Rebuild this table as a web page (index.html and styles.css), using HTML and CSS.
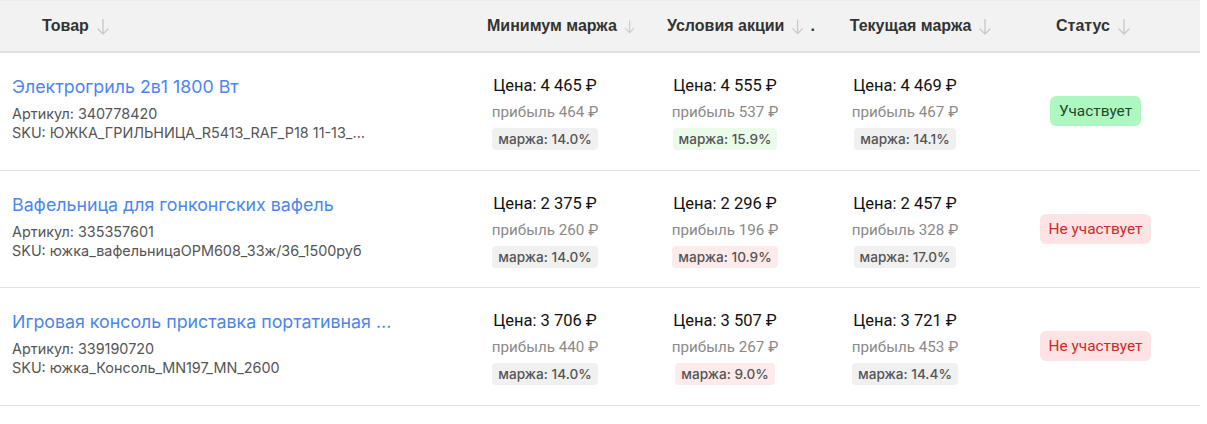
FILE: index.html
```html
<!DOCTYPE html>
<html lang="ru">
<head>
    <meta charset="UTF-8">
    <title>Товары в акции</title>
    <link rel="stylesheet" href="styles.css">
</head>
<body>

    <div class="table">
        <!-- Table header -->
        <div class="row head">
            <div class="th th-name">Товар
                <svg class="arrow" viewBox="0 0 14 18"><path d="M7 1V16M1.5 10.5L7 16L12.5 10.5"/></svg>
            </div>
            <div class="th th-mid">Минимум маржа
                <svg class="arrow" viewBox="0 0 14 18"><path d="M7 1V16M1.5 10.5L7 16L12.5 10.5"/></svg>
            </div>
            <div class="th th-mid">Условия акции
                <svg class="arrow" viewBox="0 0 14 18"><path d="M7 1V16M1.5 10.5L7 16L12.5 10.5"/></svg><span class="dot">.</span>
            </div>
            <div class="th th-mid">Текущая маржа
                <svg class="arrow" viewBox="0 0 14 18"><path d="M7 1V16M1.5 10.5L7 16L12.5 10.5"/></svg>
            </div>
            <div class="th th-status">Статус
                <svg class="arrow" viewBox="0 0 14 18"><path d="M7 1V16M1.5 10.5L7 16L12.5 10.5"/></svg>
            </div>
        </div>

        <!-- Row 1 -->
        <div class="row">
            <div class="cell product">
                <a href="#" class="name">Электрогриль 2в1 1800 Вт</a>
                <div class="meta">Артикул: 340778420</div>
                <div class="meta">SKU: ЮЖКА_ГРИЛЬНИЦА_R5413_RAF_P18 11-13_…</div>
            </div>
            <div class="cell price">
                <div class="cost">Цена: 4 465 ₽</div>
                <div class="profit">прибыль 464 ₽</div>
                <span class="margin">маржа: 14.0%</span>
            </div>
            <div class="cell price">
                <div class="cost">Цена: 4 555 ₽</div>
                <div class="profit">прибыль 537 ₽</div>
                <span class="margin good">маржа: 15.9%</span>
            </div>
            <div class="cell price">
                <div class="cost">Цена: 4 469 ₽</div>
                <div class="profit">прибыль 467 ₽</div>
                <span class="margin">маржа: 14.1%</span>
            </div>
            <div class="cell status">
                <span class="badge on">Участвует</span>
            </div>
        </div>

        <!-- Row 2 -->
        <div class="row">
            <div class="cell product">
                <a href="#" class="name">Вафельница для гонконгских вафель</a>
                <div class="meta">Артикул: 335357601</div>
                <div class="meta">SKU: южка_вафельницаOPM608_33ж/36_1500руб</div>
            </div>
            <div class="cell price">
                <div class="cost">Цена: 2 375 ₽</div>
                <div class="profit">прибыль 260 ₽</div>
                <span class="margin">маржа: 14.0%</span>
            </div>
            <div class="cell price">
                <div class="cost">Цена: 2 296 ₽</div>
                <div class="profit">прибыль 196 ₽</div>
                <span class="margin bad">маржа: 10.9%</span>
            </div>
            <div class="cell price">
                <div class="cost">Цена: 2 457 ₽</div>
                <div class="profit">прибыль 328 ₽</div>
                <span class="margin">маржа: 17.0%</span>
            </div>
            <div class="cell status">
                <span class="badge off">Не участвует</span>
            </div>
        </div>

        <!-- Row 3 -->
        <div class="row">
            <div class="cell product">
                <a href="#" class="name">Игровая консоль приставка портативная …</a>
                <div class="meta">Артикул: 339190720</div>
                <div class="meta">SKU: южка_Консоль_MN197_MN_2600</div>
            </div>
            <div class="cell price">
                <div class="cost">Цена: 3 706 ₽</div>
                <div class="profit">прибыль 440 ₽</div>
                <span class="margin">маржа: 14.0%</span>
            </div>
            <div class="cell price">
                <div class="cost">Цена: 3 507 ₽</div>
                <div class="profit">прибыль 267 ₽</div>
                <span class="margin bad">маржа: 9.0%</span>
            </div>
            <div class="cell price">
                <div class="cost">Цена: 3 721 ₽</div>
                <div class="profit">прибыль 453 ₽</div>
                <span class="margin">маржа: 14.4%</span>
            </div>
            <div class="cell status">
                <span class="badge off">Не участвует</span>
            </div>
        </div>
    </div>

</body>
</html>
```

FILE: styles.css
```css
/* Basic reset */
* {
    margin: 0;
    padding: 0;
    box-sizing: border-box;
}

body {
    font-family: Roboto, Arial, sans-serif;
    background-color: #fff;
    color: #111;
}

/* Table */
.table {
    width: 1200px;
}

.row {
    display: grid;
    grid-template-columns: 455px 180px 180px 180px 205px;
    height: 117.5px;
    border-bottom: 1px solid #e2e2e2;
}

.row.head {
    height: 53px;
    background-color: #f2f2f2;
    border-bottom: 2px solid #e0e0e0;
    border-top: 1px solid #ececec;
}

/* Header cells */
.th {
    display: flex;
    align-items: center;
    font-family: "Liberation Sans", Arial, sans-serif;
    font-weight: bold;
    font-size: 16px;
    color: #333;
    white-space: nowrap;
}

.th-name {
    padding-left: 42px;
}

.th-mid {
    justify-content: center;
    padding-left: 32px;
}

.th-status {
    justify-content: center;
    padding-right: 8px;
}

.arrow {
    width: 14px;
    height: 18px;
    margin-left: 7px;
    margin-top: 1px;
    fill: none;
    stroke: #cacaca;
    stroke-width: 1.4;
}

.dot {
    margin-left: 6px;
}

/* Body cells */
.cell {
    display: flex;
    flex-direction: column;
    justify-content: center;
}

.product {
    padding: 0 12px 4px;
}

.name {
    font-family: Inter, "Noto Sans", sans-serif;
    font-size: 17.8px;
    color: #4b86ef;
    text-decoration: none;
    white-space: nowrap;
    margin-bottom: 7px;
}

.meta {
    font-family: Inter, "Noto Sans", sans-serif;
    font-size: 14.4px;
    color: #555;
    line-height: 19px;
    white-space: nowrap;
}

.price {
    align-items: center;
    padding-top: 4px;
}

.cost {
    font-size: 16.5px;
    color: #111;
    line-height: 20px;
}

.profit {
    font-size: 15.2px;
    color: #8a8a8a;
    line-height: 20px;
    margin-top: 6px;
}

.margin {
    display: inline-block;
    margin-top: 6px;
    padding: 0 6px;
    height: 22px;
    line-height: 22px;
    border-radius: 4px;
    background-color: #f0f0f0;
    font-family: Inter, "Noto Sans", sans-serif;
    font-size: 13.6px;
    font-weight: 500;
    color: #555;
}

.margin.good {
    background-color: #eafbea;
}

.margin.bad {
    background-color: #fdeaea;
}

.status {
    align-items: center;
    padding-right: 4px;
}

.badge {
    display: inline-block;
    padding: 0 9px;
    height: 30px;
    line-height: 30px;
    border-radius: 6px;
    font-size: 15.4px;
}

.badge.on {
    background-color: #adf8c0;
    color: #1e4a2c;
}

.badge.off {
    background-color: #fde3e3;
    color: #cc2a2a;
}
```
